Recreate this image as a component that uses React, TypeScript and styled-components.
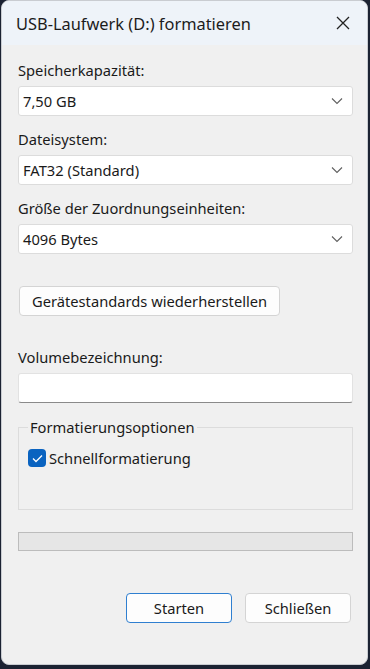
import { FC } from "react";
import styled, { createGlobalStyle } from "styled-components";

const GlobalStyle = createGlobalStyle`
  html, body {
    margin: 0;
    padding: 0;
    background: #1b2232;
  }
  body {
    font-family: "Noto Sans", "Open Sans", "Liberation Sans", sans-serif;
    width: 370px;
    height: 669px;
    overflow: hidden;
  }
`;

const Window = styled.div`
  box-sizing: border-box;
  margin: 0 2px 0 1px;
  height: 665px;
  background: #f0f0f0;
  border: 1px solid #c9ccd1;
  border-radius: 8px;
  overflow: hidden;
  display: flex;
  flex-direction: column;
  color: #1a1a1a;
`;

const TitleBar = styled.div`
  height: 44px;
  flex-shrink: 0;
  background: #eef3f9;
  display: flex;
  align-items: center;
  justify-content: space-between;
  padding: 0 16px 0 14px;
`;

const Title = styled.span`
  font-size: 16.4px;
  color: #1c1c1c;
`;

const CloseButton = styled.button`
  border: none;
  background: transparent;
  padding: 0;
  width: 16px;
  height: 16px;
  display: flex;
  align-items: center;
  justify-content: center;
`;

const Body = styled.div`
  flex: 1;
  display: flex;
  flex-direction: column;
  padding: 16px 14px 0 16px;
`;

const Label = styled.div<{ $top?: number }>`
  font-size: 14.7px;
  line-height: 18px;
  margin-top: ${({ $top }) => $top ?? 0}px;
  margin-bottom: 7px;
  color: #1a1a1a;
`;

const Select = styled.div`
  box-sizing: border-box;
  height: 30px;
  background: #ffffff;
  border: 1px solid #dcdcdc;
  border-radius: 3px;
  display: flex;
  align-items: center;
  justify-content: space-between;
  padding: 0 9px 0 4px;
  font-size: 14.7px;
  margin-bottom: 14px;
`;

const Button = styled.button<{ $primary?: boolean; $width?: number }>`
  box-sizing: border-box;
  height: 30px;
  width: ${({ $width }) => ($width ? `${$width}px` : "auto")};
  background: #fdfdfd;
  border: ${({ $primary }) =>
    $primary ? "1.5px solid #2f7fd0" : "1px solid #d4d4d4"};
  border-radius: 4px;
  font-family: inherit;
  font-size: 14.7px;
  color: #1a1a1a;
  padding: 0 12px;
  cursor: default;
`;

const ResetButton = styled(Button)`
  align-self: flex-start;
  margin: 18px 0 0 1px;
`;

const TextInput = styled.div`
  box-sizing: border-box;
  height: 30px;
  background: #ffffff;
  border: 1px solid #e2e2e2;
  border-bottom: 1px solid #8a8a8a;
  border-radius: 3px;
`;

const Group = styled.fieldset`
  box-sizing: border-box;
  margin: 15px 0 0;
  height: 92px;
  border: 1px solid #dcdcdc;
  border-radius: 0;
  padding: 12px 10px 0 9px;
`;

const Legend = styled.legend`
  font-size: 14.7px;
  line-height: 18px;
  padding: 0 2px;
  color: #1a1a1a;
`;

const CheckRow = styled.label`
  display: flex;
  align-items: center;
  gap: 3px;
  font-size: 14.7px;
`;

const CheckBox = styled.span`
  box-sizing: border-box;
  width: 18px;
  height: 18px;
  border-radius: 4px;
  background: #0a63c0;
  display: flex;
  align-items: center;
  justify-content: center;
`;

const Progress = styled.div`
  box-sizing: border-box;
  margin-top: 22px;
  height: 19px;
  background: #e6e6e6;
  border: 1px solid #bcbcbc;
`;

const Footer = styled.div`
  display: flex;
  justify-content: flex-end;
  gap: 13px;
  margin-top: 42px;
  padding-right: 2px;
`;

const Chevron: FC = () => (
  <svg width="12" height="8" viewBox="0 0 12 8">
    <path d="M1 1.5 L6 6.5 L11 1.5" fill="none" stroke="#5f5f5f" strokeWidth="1.1" />
  </svg>
);

const Dropdown: FC<{ value: string }> = ({ value }) => (
  <Select>
    <span>{value}</span>
    <Chevron />
  </Select>
);

export default function App() {
  return (
    <>
      <GlobalStyle />
      <Window>
        <TitleBar>
          <Title>USB-Laufwerk (D:) formatieren</Title>
          <CloseButton aria-label="Schließen">
            <svg width="14" height="14" viewBox="0 0 14 14">
              <path d="M1 1 L13 13 M13 1 L1 13" stroke="#222" strokeWidth="1.3" />
            </svg>
          </CloseButton>
        </TitleBar>
        <Body>
          <Label>Speicherkapazität:</Label>
          <Dropdown value="7,50 GB" />
          <Label>Dateisystem:</Label>
          <Dropdown value="FAT32 (Standard)" />
          <Label>Größe der Zuordnungseinheiten:</Label>
          <Dropdown value="4096 Bytes" />
          <ResetButton>Gerätestandards wiederherstellen</ResetButton>
          <Label $top={32}>Volumebezeichnung:</Label>
          <TextInput />
          <Group>
            <Legend>Formatierungsoptionen</Legend>
            <CheckRow>
              <CheckBox>
                <svg width="11" height="9" viewBox="0 0 11 9">
                  <path d="M1 4.5 L4 7.5 L10 1.5" fill="none" stroke="#ffffff" strokeWidth="1.3" />
                </svg>
              </CheckBox>
              Schnellformatierung
            </CheckRow>
          </Group>
          <Progress />
          <Footer>
            <Button $primary $width={106}>Starten</Button>
            <Button $width={106}>Schließen</Button>
          </Footer>
        </Body>
      </Window>
    </>
  );
}
